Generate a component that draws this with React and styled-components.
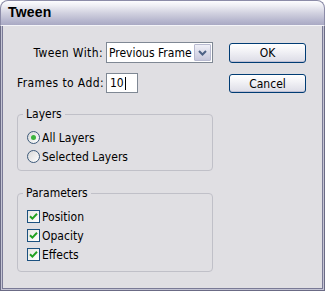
import styled, { createGlobalStyle } from "styled-components";

const GlobalStyle = createGlobalStyle`
  html, body {
    margin: 0;
    padding: 0;
    background: #ffffff;
  }
  body {
    font-family: "DejaVu Sans Condensed", "DejaVu Sans", sans-serif;
    font-size: 12px;
    color: #000000;
  }
`;

const Window = styled.div`
  width: 325px;
  height: 291px;
  display: flex;
  flex-direction: column;
  box-sizing: border-box;
`;

const TitleBar = styled.div`
  height: 25px;
  box-sizing: border-box;
  display: flex;
  align-items: center;
  padding: 0 0 2px 7px;
  border-radius: 8px 8px 0 0;
  border: 1px solid #8c8ca8;
  border-bottom: none;
  background: linear-gradient(
    #fdfdff 0%,
    #eeeef4 20%,
    #d2d2e0 50%,
    #b8b8cf 80%,
    #a9a9c3 100%
  );
  font-family: "Liberation Sans", Arial, sans-serif;
  font-weight: bold;
  font-size: 14px;
  letter-spacing: 0.2px;
`;

const Frame = styled.div`
  flex: 1;
  display: flex;
  background: #e0dfe3;
  border: 1px solid #6b6b85;
  border-top: 1px solid #f4f4f8;
  box-shadow: inset 1px 0 0 #c4c4d4, inset -1px 0 0 #c4c4d4,
    inset 0 -1px 0 #c4c4d4, inset 2px 0 0 #7a7a96, inset -2px 0 0 #7a7a96,
    inset 0 -2px 0 #7a7a96;
  padding: 16px 17px 0 16px;
  gap: 16px;
`;

const Main = styled.div`
  width: 196px;
  display: flex;
  flex-direction: column;
`;

const FieldRow = styled.div`
  display: flex;
  align-items: center;
  height: ${(p) => p.$h}px;
  margin-top: ${(p) => p.$mt || 0}px;
`;

const Label = styled.span`
  width: 86px;
  text-align: right;
  padding-right: 3px;
  white-space: nowrap;
  letter-spacing: 0.4px;
`;

const Select = styled.div`
  width: 107px;
  height: 21px;
  box-sizing: border-box;
  border: 1px solid #7f8894;
  background: #ffffff;
  display: flex;
  align-items: center;
  justify-content: space-between;
  padding: 0 1px 0 2px;
`;

const SelectText = styled.span`
  white-space: nowrap;
  overflow: hidden;
`;

const DropButton = styled.div`
  flex-shrink: 0;
  width: 17px;
  height: 17px;
  box-sizing: border-box;
  border: 1px solid #b8bad0;
  border-radius: 1px;
  background: linear-gradient(#f0f0f8, #c8c8dc);
  display: flex;
  align-items: center;
  justify-content: center;
`;

const TextInput = styled.div`
  width: 32px;
  height: 20px;
  box-sizing: border-box;
  border: 1px solid #7f8894;
  background: #ffffff;
  display: flex;
  align-items: center;
  padding-left: 3px;
`;

const Caret = styled.span`
  display: inline-block;
  width: 1px;
  height: 13px;
  background: #000000;
  margin-left: 1px;
`;

const Group = styled.fieldset`
  margin: ${(p) => p.$mt}px 0 0 0;
  padding: 0 0 ${(p) => p.$pb}px 5px;
  border: 1px solid #c0c0c8;
  border-radius: 4px;
  min-width: 0;
`;

const Legend = styled.legend`
  padding: 0 3px;
  line-height: 14px;
`;

const OptionList = styled.div`
  display: flex;
  flex-direction: column;
  margin-top: 7px;
  padding-left: 4px;
`;

const Option = styled.div`
  height: 19px;
  display: flex;
  align-items: center;
  gap: 2px;
`;

const Radio = styled.span`
  width: 13px;
  height: 13px;
  box-sizing: border-box;
  border-radius: 50%;
  border: 1px solid #3d5a7a;
  background: linear-gradient(135deg, #d8d8d8, #ffffff);
  display: flex;
  align-items: center;
  justify-content: center;
  &::after {
    content: "";
    width: 5px;
    height: 5px;
    border-radius: 50%;
    background: ${(p) => (p.$checked ? "#3cb43c" : "transparent")};
  }
`;

const Check = styled.span`
  width: 13px;
  height: 13px;
  box-sizing: border-box;
  border: 1px solid #1c5180;
  background: linear-gradient(135deg, #e6e6e2, #ffffff);
  display: flex;
  align-items: center;
  justify-content: center;
`;

const Side = styled.div`
  display: flex;
  flex-direction: column;
  padding-top: 1px;
  gap: 11px;
`;

const Button = styled.button`
  width: 77px;
  height: ${(p) => p.$h}px;
  box-sizing: border-box;
  border: 1px solid #003c74;
  border-radius: 3px;
  background: linear-gradient(#ffffff 0%, #f2f2f6 40%, #dcdce6 100%);
  box-shadow: inset 0 -1px 0 #c0c0d4;
  font-family: "DejaVu Sans Condensed", "DejaVu Sans", sans-serif;
  font-size: 12px;
  color: #000000;
  padding: 0;
`;

const Tick = () => (
  <svg width="9" height="9" viewBox="0 0 9 9">
    <path
      d="M1 4.2 L3.4 6.6 L8 1.8"
      fill="none"
      stroke="#21a121"
      strokeWidth="2"
    />
  </svg>
);

const Chevron = () => (
  <svg width="9" height="6" viewBox="0 0 9 6">
    <path d="M1 1 L4.5 4.5 L8 1" fill="none" stroke="#4d6185" strokeWidth="2" />
  </svg>
);

function App() {
  const layers = [
    { text: "All Layers", checked: true },
    { text: "Selected Layers", checked: false },
  ];
  const params = ["Position", "Opacity", "Effects"];

  return (
    <>
      <GlobalStyle />
      <Window>
        <TitleBar>Tween</TitleBar>
        <Frame>
          <Main>
            <FieldRow $h={21}>
              <Label>Tween With:</Label>
              <Select>
                <SelectText>Previous Frame</SelectText>
                <DropButton>
                  <Chevron />
                </DropButton>
              </Select>
            </FieldRow>
            <FieldRow $h={20} $mt={10}>
              <Label>Frames to Add:</Label>
              <TextInput>
                10
                <Caret />
              </TextInput>
            </FieldRow>
            <Group $mt={14} $pb={4}>
              <Legend>Layers</Legend>
              <OptionList>
                {layers.map((l) => (
                  <Option key={l.text}>
                    <Radio $checked={l.checked} />
                    {l.text}
                  </Option>
                ))}
              </OptionList>
            </Group>
            <Group $mt={15} $pb={7}>
              <Legend>Parameters</Legend>
              <OptionList>
                {params.map((p) => (
                  <Option key={p}>
                    <Check>
                      <Tick />
                    </Check>
                    {p}
                  </Option>
                ))}
              </OptionList>
            </Group>
          </Main>
          <Side>
            <Button $h={20}>OK</Button>
            <Button $h={19}>Cancel</Button>
          </Side>
        </Frame>
      </Window>
    </>
  );
}

export default App;
